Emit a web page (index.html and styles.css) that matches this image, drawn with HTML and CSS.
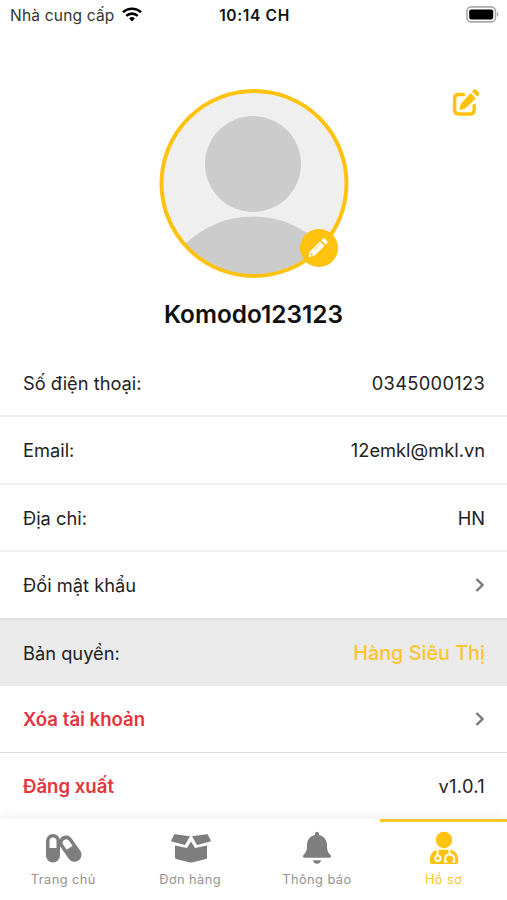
FILE: index.html
```
<!DOCTYPE html>
<html lang="vi">
<head>
    <meta charset="UTF-8">
    <meta name="viewport" content="width=device-width, initial-scale=1.0">
    <title>Hồ sơ</title>
    <link rel="stylesheet" href="styles.css">
</head>
<body>

    <div class="status-bar">
        <div class="carrier">
            <span>Nhà cung cấp</span>
            <svg class="wifi" viewBox="0 0 20 15" fill="none" stroke="#000" stroke-width="2.6">
                <path d="M1 5.3a13 13 0 0 1 18 0"/>
                <path d="M4.3 8.9a8.2 8.2 0 0 1 11.4 0"/>
                <path d="M10 14.4l-2.9-2.9a4.2 4.2 0 0 1 5.8 0z" fill="#000" stroke="none"/>
            </svg>
        </div>
        <div class="time">10:14 CH</div>
        <div class="battery-wrap">
            <svg class="battery" viewBox="0 0 33 17">
                <rect x="0.9" y="0.9" width="28.6" height="15" rx="4.4" fill="#fff" stroke="#aaa" stroke-width="1.6"/>
                <rect x="3.2" y="3.4" width="24" height="10" rx="1.8"/>
                <path d="M31 6v4.5q1.4-.6 1.4-2.25T31 6z" fill="#aaa"/>
            </svg>
        </div>
    </div>

    <div class="profile">
        <svg class="edit-icon" viewBox="0 0 28 28">
            <path d="M11.5 5.6H6.4Q2.6 5.6 2.6 9.4v11.7q0 3.8 3.8 3.8h12q3.8 0 3.8-3.8v-4.6" fill="none" stroke="#ffc20e" stroke-width="3.5" stroke-linecap="round"/>
            <path d="M18.6 3.9l5.3 5.3L14 19q-.6.6-1.4.8l-4.2 1q-1.1.2-.9-.9l1-4.3q.2-.8.8-1.4zM20 2.5l1.5-1.5q1.5-1.3 3 0l2.2 2.2q1.3 1.5 0 2.9l-1.5 1.5z" fill="#ffc20e"/>
        </svg>
        <div class="avatar">
            <svg class="avatar-picture" viewBox="0 0 190 190">
                <clipPath id="round"><circle cx="95" cy="95" r="93"/></clipPath>
                <circle cx="95" cy="95" r="93" fill="#efefef"/>
                <g clip-path="url(#round)" fill="#ccc">
                    <circle cx="94" cy="75" r="48"/>
                    <circle cx="94" cy="225" r="97.5"/>
                </g>
                <circle cx="95" cy="94.5" r="92.5" fill="none" stroke="#ffc20e" stroke-width="4"/>
            </svg>
            <div class="avatar-edit">
                <svg viewBox="0 0 20 20">
                    <path d="M12 3.4l4.5 4.5L6.2 17.8l-4.8 1.3q-.9.2-.7-.7L1.9 13.4z" fill="#fff"/>
                    <path d="M13.2 2.3L15 .6q.8-.7 1.6 0l2.8 2.8q.7.8 0 1.6l-1.8 1.8z" fill="#fff"/>
                    <path d="M3 14.7l2.3 2.2-1.9.6-1-.9z" fill="#ffc20e"/>
                    <path d="M5.5 12.6l6-5.9" stroke="#ffc20e" stroke-width=".7"/>
                </svg>
            </div>
        </div>
        <h1>Komodo123123</h1>
    </div>

    <div class="info-list">
        <div class="info-row">
            <span>Số điện thoại:</span>
            <span class="phone">0345000123</span>
        </div>
        <div class="info-row email">
            <span>Email:</span>
            <span>12emkl@mkl.vn</span>
        </div>
        <div class="info-row">
            <span>Địa chỉ:</span>
            <span>HN</span>
        </div>
        <div class="info-row password">
            <span>Đổi mật khẩu</span>
            <svg class="chevron" viewBox="0 0 10 16"><path d="M1.5 2L7.5 8l-6 6"/></svg>
        </div>
        <div class="info-row license">
            <span>Bản quyền:</span>
            <span class="license-name">Hàng Siêu Thị</span>
        </div>
        <div class="info-row delete">
            <span class="danger">Xóa tài khoản</span>
            <svg class="chevron" viewBox="0 0 10 16"><path d="M1.5 2L7.5 8l-6 6"/></svg>
        </div>
        <div class="info-row last">
            <span class="danger">Đăng xuất</span>
            <span class="version">v1.0.1</span>
        </div>
    </div>

    <div class="tab-bar">
        <div class="tab">
            <svg width="38" height="34" viewBox="-1 -1 38 34">
                <rect x="1" y="2" width="14" height="28.5" rx="7"/>
                <path d="M4.5 16V9q0-3.5 3.5-3.5T11.5 9v7z" fill="#fff"/>
                <g transform="rotate(-35 25.5 17)">
                    <rect x="18.5" y="2" width="14" height="29" rx="7"/>
                    <path d="M22 15.5V9.5Q22 6 25.5 6T29 9.5v6z" fill="#fff"/>
                </g>
            </svg>
            <span>Trang chủ</span>
        </div>
        <div class="tab">
            <svg width="42" height="34" viewBox="-1 -1 42 34">
                <path d="M5 13.5l12 2.6 4-6.6 4 6.6 12-2.6v12.2q0 1-1 1.3l-14 3.4q-1 .3-2 0L6 27q-1-.3-1-1.3z"/>
                <path d="M5.3 2.2L20 4.3l-5 8.6L1.6 9.6q-.8-.3-.4-1.1L4 2.9q.4-.9 1.300-.7zM36.7 2.2L22 4.3l5 8.6 13.4-3.3q.8-.3.4-1.1L38 2.9q-.4-.9-1.3-.7z"/>
            </svg>
            <span>Đơn hàng</span>
        </div>
        <div class="tab">
            <svg width="30" height="34" viewBox="0 0 30 34">
                <path d="M15 .8q2 0 2 2v1.3c5 1 8 5 8 9.9 0 6.500 1.300 7.500 3.300 9.800 1.600 1.800.3 2.900-.8 2.900h-25c-1.100 0-2.400-1.100-.8-2.900C3.700 21.500 5 20.500 5 14c0-4.900 3-8.900 8-9.900V2.800q0-2 2-2zM11 29.200h8q-.6 3.600-4 3.600t-4-3.600z"/>
            </svg>
            <span>Thông báo</span>
        </div>
        <div class="tab active">
            <svg width="30" height="34" viewBox="0 0 30 34">
                <circle cx="15" cy="9" r="8.2"/>
                <path d="M.7 30c0-6.5 2.5-10.800 9-11.300h10.600c6.500.5 9 4.800 9 11.300q0 3-2.500 3H3.200Q.7 33 .7 30z"/>
                <g fill="none" stroke="#fff" stroke-width="1.9">
                    <path d="M8.500 18v6.500M20.500 18v5.500M18.200 30.700h-2v-2.500q0-4.700 4.500-4.700t4.500 4.700v2.500h-2"/>
                    <circle cx="8.800" cy="27.300" r="2.700"/>
                </g>
            </svg>
            <span>Hồ sơ</span>
        </div>
    </div>

</body>
</html>
```
FILE: styles.css
```
* {
    box-sizing: border-box;
}

body {
    margin: 0;
    height: 900px;
    display: flex;
    flex-direction: column;
    overflow: hidden;
    background: #fff;
    color: #222;
    font-family: Inter, "Open Sans", sans-serif;
}

.status-bar {
    height: 30px;
    flex: none;
    padding: 0 8px 0 10px;
    display: grid;
    grid-template-columns: 1fr auto 1fr;
    align-items: center;
    font-size: 15.5px;
}

.carrier {
    display: flex;
    align-items: center;
    gap: 7px;
    letter-spacing: 0.2px;
    color: #333;
}

.wifi {
    width: 20px;
    height: 15px;
    margin-top: -2px;
}

.time {
    color: #111;
    font-weight: 600;
    letter-spacing: 0.65px;
}

.battery-wrap {
    display: flex;
    justify-content: flex-end;
    margin-top: -2px;
}

.battery {
    width: 33px;
    height: 17px;
}

.profile {
    position: relative;
    height: 320px;
    flex: none;
    padding-top: 59px;
    display: flex;
    flex-direction: column;
    align-items: center;
}

.edit-icon {
    position: absolute;
    top: 59px;
    right: 27px;
    width: 28px;
    height: 28px;
}

.avatar {
    position: relative;
    width: 190px;
    height: 190px;
}

.avatar-picture {
    display: block;
}

.avatar-edit {
    position: absolute;
    right: 11px;
    bottom: 12px;
    width: 38px;
    height: 38px;
    border-radius: 50%;
    background: #ffc20e;
    display: flex;
    align-items: center;
    justify-content: center;
}

.avatar-edit svg {
    width: 20px;
    height: 20px;
    margin-right: 2px;
}

h1 {
    margin: 19px 0 0;
    color: #111;
    font-size: 24.4px;
    line-height: 32px;
    font-weight: 600;
}

.info-list {
    flex: 1;
    min-height: 0;
}

.info-row {
    height: 67.4px;
    padding: 1px 22px 0 23px;
    display: flex;
    align-items: center;
    justify-content: space-between;
    border-bottom: 2px solid #f0f0f0;
    font-size: 18.3px;
}

.email {
    padding-top: 0;
}

.phone {
    letter-spacing: 0.3px;
}

.password {
    height: 65.8px;
    padding-top: 0;
    padding-bottom: 1px;
    border-bottom: none;
}

.license {
    height: 68px;
    background: #eaeaea;
    border-top: 2px solid #e0e0e0;
    border-bottom: none;
}

.license-name {
    color: #fbc52d;
    font-size: 19.8px;
    font-weight: 500;
}

.delete {
    height: 67px;
    padding-top: 0;
    border-bottom: 1px solid #dcdcdc;
}

.last {
    height: 67px;
    padding-top: 0;
    border-bottom: none;
}

.danger {
    color: #e5343d;
    font-size: 18.6px;
    font-weight: 600;
}

.version {
    letter-spacing: 0.3px;
}

.chevron {
    width: 10px;
    height: 16px;
    fill: none;
    stroke: #777;
    stroke-width: 2.4;
}

.tab-bar {
    position: relative;
    flex: none;
    height: 81px;
    display: flex;
    background: #fff;
    box-shadow: 0 0 14px rgba(0, 0, 0, 0.09);
}

.tab {
    flex: 1;
    padding-top: 12px;
    display: flex;
    flex-direction: column;
    align-items: center;
    color: #929292;
    fill: #7e7e7e;
    font-size: 12.8px;
    letter-spacing: 0.45px;
}

.tab svg {
    height: 34px;
}

.tab span {
    margin-top: 7px;
    line-height: 16px;
}

.active {
    border-top: 3px solid #fbc52d;
    padding-top: 9px;
    color: #fbc52d;
    fill: #ffc20e;
}
```
